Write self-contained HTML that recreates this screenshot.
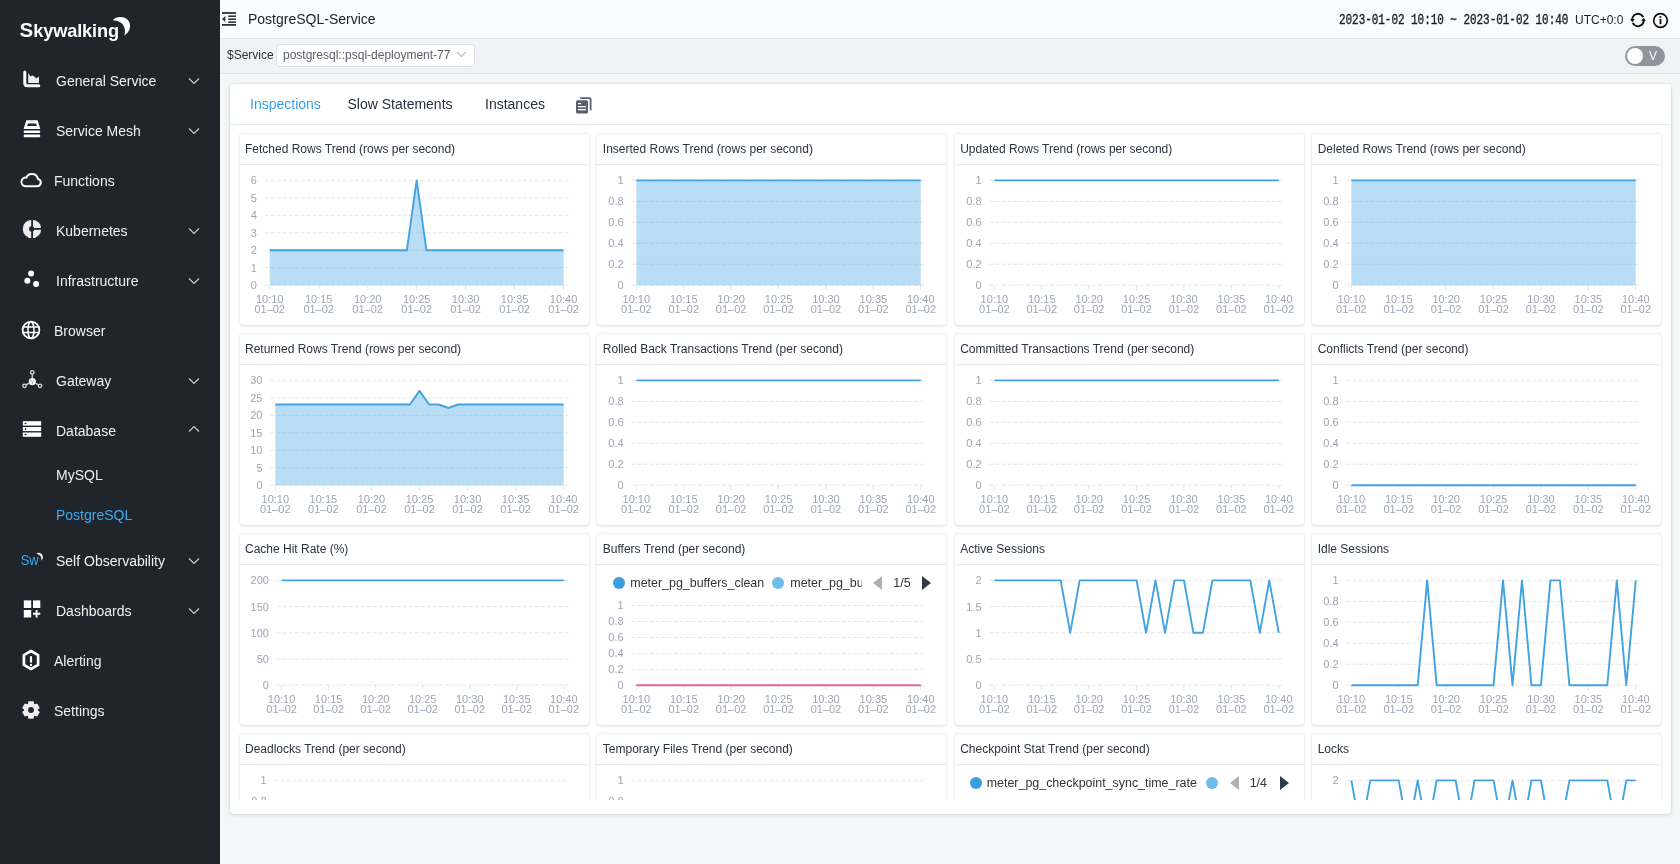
<!DOCTYPE html>
<html><head><meta charset="utf-8"><title>SkyWalking</title>
<style>
*{box-sizing:border-box;margin:0;padding:0}
html,body{width:1680px;height:864px;overflow:hidden;background:#f4f7f8;font-family:"Liberation Sans", sans-serif}
svg text{font-family:"Liberation Sans", sans-serif}
#side{position:absolute;left:0;top:0;width:220px;height:864px;background:#20242b;will-change:transform}
.logo{position:absolute;left:19px;top:13px;color:#fff;font-size:21px;font-weight:bold;letter-spacing:-0.9px}
.mi{position:absolute;color:#f0f0f0;font-size:14px;line-height:18px;white-space:nowrap}
.ic{position:absolute;line-height:0}
.chev{position:absolute}
#nav{position:absolute;left:220px;top:0;width:1460px;height:39px;background:#fafbfc;border-bottom:1px solid #e2e6ea;will-change:transform}
#tool{position:absolute;left:220px;top:39px;width:1460px;height:35px;background:#f0f2f5;border-bottom:1px solid #e2e6ea;will-change:transform}
#tabcard{position:absolute;left:229.5px;top:84px;width:1441px;height:730px;background:#fff;border-radius:4px;box-shadow:0 0 0 1px rgba(0,0,0,0.035),0 1px 4px rgba(0,0,0,0.12)}
#tabhead{position:absolute;left:0;top:0;width:100%;height:40.5px;border-bottom:1px solid #e6e9ed;will-change:transform}
.tab{position:absolute;top:11px;font-size:14px;line-height:18px;color:#28303b;white-space:nowrap}
#grid{position:absolute;left:0;top:0;width:1680px;height:799.5px;overflow:hidden;will-change:transform}
.card{position:absolute;width:349px;height:191px;background:#fff;border-radius:3px;box-shadow:0 0.5px 3px rgba(0,0,0,0.16)}
.ch{position:absolute;left:0;top:0;width:100%;height:30.5px;border-bottom:1px solid #e6e9ed}
.ch span{position:absolute;left:5.5px;top:8px;font-size:12px;line-height:14px;color:#2a3340;white-space:nowrap}
.lg{position:absolute;left:0;width:100%;height:0}
.lg i{position:absolute;top:-6px;width:12px;height:12px;border-radius:50%}
.lg b{position:absolute;top:-7px;font-weight:normal;font-size:12.45px;line-height:14px;color:#333;white-space:nowrap}
.lg s{position:absolute;top:-7px;width:0;height:0;border-top:7px solid transparent;border-bottom:7px solid transparent}
.lg s.al{border-right:9px solid #aab0b8}
.lg s.ar{border-left:9px solid #2f3a48}
</style></head><body>
<div id="side">
<svg style="position:absolute;left:0;top:0" width="220" height="864" viewBox="0 0 220 864"><path d="M24.8 72V83.2Q24.8 85.7 27.3 85.7H38.8" fill="none" stroke="#fff" stroke-width="3" stroke-linecap="round"/><path d="M28.2 73L30.6 76.6 32.2 75.6 34.2 76.2 36.2 78.6 39 76.5V83H28.2Z" fill="#ececec"/><path d="M26.3 120.3H37.6L40.3 129H23.6Z M27.9 123.4L27.1 126.1H36.9L36.1 123.4Z" fill="#fff" fill-rule="evenodd"/><rect x="23.6" y="130.5" width="16.7" height="2.6" rx="1.3" fill="#fff"/><rect x="23.6" y="134.6" width="16.7" height="2.6" rx="1.3" fill="#fff"/><path d="M25.2 186.2H37.2A3.7 3.7 0 0 0 37.9 178.9A6.1 6.1 0 0 0 26.3 177.6A4.3 4.3 0 0 0 25.2 186.2Z" fill="none" stroke="#fff" stroke-width="2"/><circle cx="32" cy="228.9" r="9.25" fill="#ececec"/><rect x="31.2" y="219" width="1.8" height="20" fill="#20242b"/><rect x="32" y="228" width="10" height="1.8" fill="#20242b"/><circle cx="31.7" cy="228.9" r="2.6" fill="#20242b"/><circle cx="31.1" cy="273.5" r="3" fill="#fff"/><circle cx="27.3" cy="280.8" r="3" fill="#fff"/><circle cx="36.1" cy="284.1" r="3" fill="#fff"/><circle cx="31" cy="330" r="8.4" fill="none" stroke="#fff" stroke-width="1.8"/><ellipse cx="30.95" cy="330" rx="3.0" ry="8.3" fill="none" stroke="#fff" stroke-width="1.5"/><path d="M22.5 326.9H39.5M22.5 332.6H39.5" stroke="#fff" stroke-width="1.5"/><circle cx="32.3" cy="381.6" r="3.6" fill="#fff"/><path d="M30.4 380.2L32.3 381.5 34.2 380.2M32.3 381.5V384.5" fill="none" stroke="#888" stroke-width="0.7"/><circle cx="32.3" cy="372.4" r="1.75" fill="none" stroke="#ddd" stroke-width="1.3"/><path d="M32.3 374.2V377.9" stroke="#ccc" stroke-width="1.5"/><circle cx="24.5" cy="385.8" r="1.75" fill="none" stroke="#ddd" stroke-width="1.3"/><circle cx="40" cy="385.8" r="1.75" fill="none" stroke="#ddd" stroke-width="1.3"/><path d="M26.1 384.8L29.2 383.1M38.4 384.8L35.4 383.1" stroke="#ccc" stroke-width="1.5"/><rect x="22.8" y="421.2" width="18.4" height="4.4" fill="#fff"/><rect x="22.8" y="427" width="18.4" height="4.1" fill="#fff"/><rect x="22.8" y="432.5" width="18.4" height="4.3" fill="#fff"/><ellipse cx="25.5" cy="423.4" rx="1.1" ry="0.75" fill="#20242b"/><ellipse cx="25.5" cy="429" rx="0.75" ry="1.05" fill="#20242b"/><ellipse cx="25.5" cy="434.6" rx="1.1" ry="0.75" fill="#20242b"/><text x="20.8" y="565" font-size="15.5" fill="#3aa9ee" letter-spacing="-0.4" textLength="17.5" lengthAdjust="spacingAndGlyphs">Sw</text><path d="M36.6 553.2C38.8 552.3 41.6 553 42.6 555.4 43.4 557.3 42.8 559.6 41.2 560.8 41.8 558.6 41 556.2 39.2 555 38.4 554.4 37.4 554.1 36.6 553.2Z" fill="#eee"/><rect x="23.8" y="600.4" width="7.4" height="7.6" fill="#fff"/><rect x="33" y="600.4" width="7.3" height="7.6" fill="#fff"/><rect x="23.8" y="610" width="7.4" height="7.5" fill="#fff"/><path d="M36.6 610V617.5M33 613.7H40.3" stroke="#fff" stroke-width="1.9"/><path d="M31 651L38.1 655.1V664.9L31 669 23.9 664.9V655.1Z" fill="none" stroke="#fff" stroke-width="2.7" stroke-linejoin="round"/><path d="M31 657V661.8" stroke="#fff" stroke-width="2.2" stroke-linecap="round"/><circle cx="31" cy="665" r="1.15" fill="#fff"/><path d="M27.91 703.83 L28.40 701.28 L33.60 701.28 L34.09 703.83 L34.80 704.24 L37.25 703.39 L39.85 707.89 L37.89 709.59 L37.89 710.41 L39.85 712.11 L37.25 716.61 L34.80 715.76 L34.09 716.17 L33.60 718.72 L28.40 718.72 L27.91 716.17 L27.20 715.76 L24.75 716.61 L22.15 712.11 L24.11 710.41 L24.11 709.59 L22.15 707.89 L24.75 703.39 L27.20 704.24Z M33.90 710.00 A2.9 2.9 0 1 0 28.10 710.00 A2.9 2.9 0 1 0 33.90 710.00Z" fill="#eee" fill-rule="evenodd"/><text x="19.6" y="36.7" font-weight="bold" fill="#fff"><tspan font-size="20.5">S</tspan><tspan font-size="18.2" letter-spacing="-0.15">kywalking</tspan></text><path d="M112.8 20.3C116 16.5 124 15.5 128.3 20.5 131.5 24.5 130.5 32 124.3 35.6 126 30.5 124.5 25 120.5 22.5 118 21 115 20.3 112.8 20.3Z" fill="#fff"/></svg><div class="mi" style="left:56px;top:71.7px">General Service</div><svg class="chev" style="left:188px;top:77px" width="12" height="8" viewBox="0 0 12 8"><path d="M1 1.5l5 5 5-5" fill="none" stroke="#cfd3d8" stroke-width="1.1"/></svg><div class="mi" style="left:56px;top:121.7px">Service Mesh</div><svg class="chev" style="left:188px;top:127px" width="12" height="8" viewBox="0 0 12 8"><path d="M1 1.5l5 5 5-5" fill="none" stroke="#cfd3d8" stroke-width="1.1"/></svg><div class="mi" style="left:54px;top:171.7px">Functions</div><div class="mi" style="left:56px;top:221.7px">Kubernetes</div><svg class="chev" style="left:188px;top:227px" width="12" height="8" viewBox="0 0 12 8"><path d="M1 1.5l5 5 5-5" fill="none" stroke="#cfd3d8" stroke-width="1.1"/></svg><div class="mi" style="left:56px;top:271.7px">Infrastructure</div><svg class="chev" style="left:188px;top:277px" width="12" height="8" viewBox="0 0 12 8"><path d="M1 1.5l5 5 5-5" fill="none" stroke="#cfd3d8" stroke-width="1.1"/></svg><div class="mi" style="left:54px;top:321.7px">Browser</div><div class="mi" style="left:56px;top:371.7px">Gateway</div><svg class="chev" style="left:188px;top:377px" width="12" height="8" viewBox="0 0 12 8"><path d="M1 1.5l5 5 5-5" fill="none" stroke="#cfd3d8" stroke-width="1.1"/></svg><div class="mi" style="left:56px;top:421.7px">Database</div><svg class="chev" style="left:188px;top:425px" width="12" height="8" viewBox="0 0 12 8"><path d="M1 6.5l5-5 5 5" fill="none" stroke="#cfd3d8" stroke-width="1.1"/></svg><div class="mi" style="left:56px;top:551.7px">Self Observability</div><svg class="chev" style="left:188px;top:557px" width="12" height="8" viewBox="0 0 12 8"><path d="M1 1.5l5 5 5-5" fill="none" stroke="#cfd3d8" stroke-width="1.1"/></svg><div class="mi" style="left:56px;top:601.7px">Dashboards</div><svg class="chev" style="left:188px;top:607px" width="12" height="8" viewBox="0 0 12 8"><path d="M1 1.5l5 5 5-5" fill="none" stroke="#cfd3d8" stroke-width="1.1"/></svg><div class="mi" style="left:54px;top:651.7px">Alerting</div><div class="mi" style="left:54px;top:701.7px">Settings</div><div class="mi" style="left:56px;top:466.2px">MySQL</div><div class="mi" style="left:56px;top:506.2px;color:#40a9f0">PostgreSQL</div>
</div>
<div id="nav">
<svg style="position:absolute;left:2px;top:12px" width="15" height="14" viewBox="0 0 15 14"><rect x="0" y="0.1" width="14" height="1.8" fill="#2b333e"/><rect x="6.3" y="3.4" width="7.7" height="1.6" fill="#2b333e"/><rect x="6.3" y="6.4" width="7.7" height="1.6" fill="#2b333e"/><rect x="6.3" y="9.4" width="7.7" height="1.6" fill="#2b333e"/><rect x="0" y="12" width="14" height="1.8" fill="#2b333e"/><path d="M0 7l3.3 -3v6z" fill="#2b333e"/></svg>
<div style="position:absolute;left:28px;top:10px;font-size:14px;line-height:18px;color:#1c1f24">PostgreSQL-Service</div>
<div style="position:absolute;left:1119px;top:11.7px;font-family:'Liberation Mono',monospace;font-size:11px;line-height:16px;color:#1c1f24;transform:scaleY(1.25);transform-origin:0 50%;letter-spacing:-0.05px;-webkit-text-stroke:0.3px #1c1f24">2023-01-02 10:10 ~ 2023-01-02 10:40</div>
<div style="position:absolute;left:1355px;top:12px;font-size:12px;line-height:16px;color:#1c1f24">UTC+0:0</div>
<svg style="position:absolute;left:1410px;top:12.2px" width="16" height="16" viewBox="0 0 16 16"><path d="M2.4 8.6A5.7 5.7 0 0 1 13.2 5.2" fill="none" stroke="#111" stroke-width="2"/><path d="M13.6 7.4A5.7 5.7 0 0 1 2.8 10.8" fill="none" stroke="#111" stroke-width="2"/><path d="M0.2 6.9L4.6 6.9 2.4 10.2Z" fill="#111"/><path d="M15.8 9.1L11.4 9.1 13.6 5.8Z" fill="#111"/></svg>
<svg style="position:absolute;left:1432px;top:12px" width="17" height="17" viewBox="0 0 17 17"><circle cx="8.5" cy="8.5" r="6.8" fill="none" stroke="#111" stroke-width="1.7"/><rect x="7.6" y="7" width="1.8" height="5.3" fill="#111"/><circle cx="8.5" cy="5" r="1.05" fill="#111"/></svg>
</div>
<div id="tool">
<div style="position:absolute;left:7px;top:9px;font-size:12px;line-height:14px;color:#2a3340">$Service</div>
<div style="position:absolute;left:55.5px;top:4.5px;width:199.5px;height:23px;background:#fff;border:1px solid #dcdfe6;border-radius:4px"></div>
<div style="position:absolute;left:63px;top:8.7px;font-size:12px;line-height:14px;color:#5a5e66">postgresql::psql-deployment-77</div>
<svg style="position:absolute;left:236px;top:12px" width="11" height="7" viewBox="0 0 11 7"><path d="M1 1l4.5 4.5L10 1" fill="none" stroke="#b8bcc4" stroke-width="1.1"/></svg>
<div style="position:absolute;left:1405px;top:7px;width:40px;height:20px;border-radius:10px;background:#8f959e"></div>
<div style="position:absolute;left:1407px;top:8.8px;width:16.4px;height:16.4px;border-radius:50%;background:#fff"></div>
<div style="position:absolute;left:1429px;top:9px;font-size:12px;line-height:16px;color:#fff">V</div>
</div>
<div id="tabcard">
<div id="tabhead">
<div class="tab" style="left:20px;color:#3a9ee6">Inspections</div>
<div class="tab" style="left:117.5px">Slow Statements</div>
<div class="tab" style="left:255px">Instances</div>
<svg style="position:absolute;left:346px;top:13.4px" width="16" height="17" viewBox="0 0 16 17"><path d="M4.2 1.2h9.4a1 1 0 0 1 1 1v11" fill="none" stroke="#59606b" stroke-width="1.8"/><rect x="0" y="3.2" width="12" height="13.4" rx="1.5" fill="#59606b"/><rect x="2" y="6" width="3" height="1.2" fill="#fff"/><rect x="2" y="9" width="8" height="1.3" fill="#fff"/><rect x="2" y="12" width="8" height="1.3" fill="#fff"/></svg>
</div>
</div>
<div id="grid">
<div class="card" style="left:239.5px;top:134px"><div class="ch"><span>Fetched Rows Trend (rows per second)</span></div><svg width="349" height="191" viewBox="0 0 349 191" style="position:absolute;left:0;top:0"><line x1="24.8" y1="151.20" x2="328.5" y2="151.20" stroke="rgba(193,197,202,0.45)" stroke-width="1" stroke-dasharray="4 2"/><text x="16.8" y="155.10" text-anchor="end" font-size="11" fill="#9da5b2">0</text><line x1="24.8" y1="133.73" x2="328.5" y2="133.73" stroke="rgba(193,197,202,0.45)" stroke-width="1" stroke-dasharray="4 2"/><text x="16.8" y="137.63" text-anchor="end" font-size="11" fill="#9da5b2">1</text><line x1="24.8" y1="116.27" x2="328.5" y2="116.27" stroke="rgba(193,197,202,0.45)" stroke-width="1" stroke-dasharray="4 2"/><text x="16.8" y="120.17" text-anchor="end" font-size="11" fill="#9da5b2">2</text><line x1="24.8" y1="98.80" x2="328.5" y2="98.80" stroke="rgba(193,197,202,0.45)" stroke-width="1" stroke-dasharray="4 2"/><text x="16.8" y="102.70" text-anchor="end" font-size="11" fill="#9da5b2">3</text><line x1="24.8" y1="81.33" x2="328.5" y2="81.33" stroke="rgba(193,197,202,0.45)" stroke-width="1" stroke-dasharray="4 2"/><text x="16.8" y="85.23" text-anchor="end" font-size="11" fill="#9da5b2">4</text><line x1="24.8" y1="63.87" x2="328.5" y2="63.87" stroke="rgba(193,197,202,0.45)" stroke-width="1" stroke-dasharray="4 2"/><text x="16.8" y="67.77" text-anchor="end" font-size="11" fill="#9da5b2">5</text><line x1="24.8" y1="46.40" x2="328.5" y2="46.40" stroke="rgba(193,197,202,0.45)" stroke-width="1" stroke-dasharray="4 2"/><text x="16.8" y="50.30" text-anchor="end" font-size="11" fill="#9da5b2">6</text><line x1="29.70" y1="151.2" x2="29.70" y2="156.2" stroke="rgba(193,197,202,0.45)" stroke-width="1"/><text x="29.70" y="168.70" text-anchor="middle" font-size="11" fill="#9da5b2">10:10</text><text x="29.70" y="179.40" text-anchor="middle" font-size="11" fill="#9da5b2">01–02</text><line x1="78.68" y1="151.2" x2="78.68" y2="156.2" stroke="rgba(193,197,202,0.45)" stroke-width="1"/><text x="78.68" y="168.70" text-anchor="middle" font-size="11" fill="#9da5b2">10:15</text><text x="78.68" y="179.40" text-anchor="middle" font-size="11" fill="#9da5b2">01–02</text><line x1="127.67" y1="151.2" x2="127.67" y2="156.2" stroke="rgba(193,197,202,0.45)" stroke-width="1"/><text x="127.67" y="168.70" text-anchor="middle" font-size="11" fill="#9da5b2">10:20</text><text x="127.67" y="179.40" text-anchor="middle" font-size="11" fill="#9da5b2">01–02</text><line x1="176.65" y1="151.2" x2="176.65" y2="156.2" stroke="rgba(193,197,202,0.45)" stroke-width="1"/><text x="176.65" y="168.70" text-anchor="middle" font-size="11" fill="#9da5b2">10:25</text><text x="176.65" y="179.40" text-anchor="middle" font-size="11" fill="#9da5b2">01–02</text><line x1="225.63" y1="151.2" x2="225.63" y2="156.2" stroke="rgba(193,197,202,0.45)" stroke-width="1"/><text x="225.63" y="168.70" text-anchor="middle" font-size="11" fill="#9da5b2">10:30</text><text x="225.63" y="179.40" text-anchor="middle" font-size="11" fill="#9da5b2">01–02</text><line x1="274.62" y1="151.2" x2="274.62" y2="156.2" stroke="rgba(193,197,202,0.45)" stroke-width="1"/><text x="274.62" y="168.70" text-anchor="middle" font-size="11" fill="#9da5b2">10:35</text><text x="274.62" y="179.40" text-anchor="middle" font-size="11" fill="#9da5b2">01–02</text><line x1="323.60" y1="151.2" x2="323.60" y2="156.2" stroke="rgba(193,197,202,0.45)" stroke-width="1"/><text x="323.60" y="168.70" text-anchor="middle" font-size="11" fill="#9da5b2">10:40</text><text x="323.60" y="179.40" text-anchor="middle" font-size="11" fill="#9da5b2">01–02</text><polygon points="29.70,151.2 29.70,116.27 39.50,116.27 49.29,116.27 59.09,116.27 68.89,116.27 78.68,116.27 88.48,116.27 98.28,116.27 108.07,116.27 117.87,116.27 127.67,116.27 137.46,116.27 147.26,116.27 157.06,116.27 166.85,116.27 176.65,46.40 186.45,116.27 196.24,116.27 206.04,116.27 215.84,116.27 225.63,116.27 235.43,116.27 245.23,116.27 255.02,116.27 264.82,116.27 274.62,116.27 284.41,116.27 294.21,116.27 304.01,116.27 313.80,116.27 323.60,116.27 323.60,151.2" fill="rgba(80,170,230,0.4)"/><polyline points="29.70,116.27 39.50,116.27 49.29,116.27 59.09,116.27 68.89,116.27 78.68,116.27 88.48,116.27 98.28,116.27 108.07,116.27 117.87,116.27 127.67,116.27 137.46,116.27 147.26,116.27 157.06,116.27 166.85,116.27 176.65,46.40 186.45,116.27 196.24,116.27 206.04,116.27 215.84,116.27 225.63,116.27 235.43,116.27 245.23,116.27 255.02,116.27 264.82,116.27 274.62,116.27 284.41,116.27 294.21,116.27 304.01,116.27 313.80,116.27 323.60,116.27" fill="none" stroke="#42a3e3" stroke-width="1.9" stroke-linejoin="round"/></svg></div><div class="card" style="left:597.3px;top:134px"><div class="ch"><span>Inserted Rows Trend (rows per second)</span></div><svg width="349" height="191" viewBox="0 0 349 191" style="position:absolute;left:0;top:0"><line x1="34.6" y1="151.20" x2="328.5" y2="151.20" stroke="rgba(193,197,202,0.45)" stroke-width="1" stroke-dasharray="4 2"/><text x="26.6" y="155.10" text-anchor="end" font-size="11" fill="#9da5b2">0</text><line x1="34.6" y1="130.24" x2="328.5" y2="130.24" stroke="rgba(193,197,202,0.45)" stroke-width="1" stroke-dasharray="4 2"/><text x="26.6" y="134.14" text-anchor="end" font-size="11" fill="#9da5b2">0.2</text><line x1="34.6" y1="109.28" x2="328.5" y2="109.28" stroke="rgba(193,197,202,0.45)" stroke-width="1" stroke-dasharray="4 2"/><text x="26.6" y="113.18" text-anchor="end" font-size="11" fill="#9da5b2">0.4</text><line x1="34.6" y1="88.32" x2="328.5" y2="88.32" stroke="rgba(193,197,202,0.45)" stroke-width="1" stroke-dasharray="4 2"/><text x="26.6" y="92.22" text-anchor="end" font-size="11" fill="#9da5b2">0.6</text><line x1="34.6" y1="67.36" x2="328.5" y2="67.36" stroke="rgba(193,197,202,0.45)" stroke-width="1" stroke-dasharray="4 2"/><text x="26.6" y="71.26" text-anchor="end" font-size="11" fill="#9da5b2">0.8</text><line x1="34.6" y1="46.40" x2="328.5" y2="46.40" stroke="rgba(193,197,202,0.45)" stroke-width="1" stroke-dasharray="4 2"/><text x="26.6" y="50.30" text-anchor="end" font-size="11" fill="#9da5b2">1</text><line x1="39.34" y1="151.2" x2="39.34" y2="156.2" stroke="rgba(193,197,202,0.45)" stroke-width="1"/><text x="39.34" y="168.70" text-anchor="middle" font-size="11" fill="#9da5b2">10:10</text><text x="39.34" y="179.40" text-anchor="middle" font-size="11" fill="#9da5b2">01–02</text><line x1="86.74" y1="151.2" x2="86.74" y2="156.2" stroke="rgba(193,197,202,0.45)" stroke-width="1"/><text x="86.74" y="168.70" text-anchor="middle" font-size="11" fill="#9da5b2">10:15</text><text x="86.74" y="179.40" text-anchor="middle" font-size="11" fill="#9da5b2">01–02</text><line x1="134.15" y1="151.2" x2="134.15" y2="156.2" stroke="rgba(193,197,202,0.45)" stroke-width="1"/><text x="134.15" y="168.70" text-anchor="middle" font-size="11" fill="#9da5b2">10:20</text><text x="134.15" y="179.40" text-anchor="middle" font-size="11" fill="#9da5b2">01–02</text><line x1="181.55" y1="151.2" x2="181.55" y2="156.2" stroke="rgba(193,197,202,0.45)" stroke-width="1"/><text x="181.55" y="168.70" text-anchor="middle" font-size="11" fill="#9da5b2">10:25</text><text x="181.55" y="179.40" text-anchor="middle" font-size="11" fill="#9da5b2">01–02</text><line x1="228.95" y1="151.2" x2="228.95" y2="156.2" stroke="rgba(193,197,202,0.45)" stroke-width="1"/><text x="228.95" y="168.70" text-anchor="middle" font-size="11" fill="#9da5b2">10:30</text><text x="228.95" y="179.40" text-anchor="middle" font-size="11" fill="#9da5b2">01–02</text><line x1="276.36" y1="151.2" x2="276.36" y2="156.2" stroke="rgba(193,197,202,0.45)" stroke-width="1"/><text x="276.36" y="168.70" text-anchor="middle" font-size="11" fill="#9da5b2">10:35</text><text x="276.36" y="179.40" text-anchor="middle" font-size="11" fill="#9da5b2">01–02</text><line x1="323.76" y1="151.2" x2="323.76" y2="156.2" stroke="rgba(193,197,202,0.45)" stroke-width="1"/><text x="323.76" y="168.70" text-anchor="middle" font-size="11" fill="#9da5b2">10:40</text><text x="323.76" y="179.40" text-anchor="middle" font-size="11" fill="#9da5b2">01–02</text><polygon points="39.34,151.2 39.34,46.40 48.82,46.40 58.30,46.40 67.78,46.40 77.26,46.40 86.74,46.40 96.22,46.40 105.70,46.40 115.19,46.40 124.67,46.40 134.15,46.40 143.63,46.40 153.11,46.40 162.59,46.40 172.07,46.40 181.55,46.40 191.03,46.40 200.51,46.40 209.99,46.40 219.47,46.40 228.95,46.40 238.43,46.40 247.91,46.40 257.40,46.40 266.88,46.40 276.36,46.40 285.84,46.40 295.32,46.40 304.80,46.40 314.28,46.40 323.76,46.40 323.76,151.2" fill="rgba(80,170,230,0.4)"/><polyline points="39.34,46.40 48.82,46.40 58.30,46.40 67.78,46.40 77.26,46.40 86.74,46.40 96.22,46.40 105.70,46.40 115.19,46.40 124.67,46.40 134.15,46.40 143.63,46.40 153.11,46.40 162.59,46.40 172.07,46.40 181.55,46.40 191.03,46.40 200.51,46.40 209.99,46.40 219.47,46.40 228.95,46.40 238.43,46.40 247.91,46.40 257.40,46.40 266.88,46.40 276.36,46.40 285.84,46.40 295.32,46.40 304.80,46.40 314.28,46.40 323.76,46.40" fill="none" stroke="#42a3e3" stroke-width="1.9" stroke-linejoin="round"/></svg></div><div class="card" style="left:954.7px;top:134px"><div class="ch"><span>Updated Rows Trend (rows per second)</span></div><svg width="349" height="191" viewBox="0 0 349 191" style="position:absolute;left:0;top:0"><line x1="34.6" y1="151.20" x2="328.5" y2="151.20" stroke="rgba(193,197,202,0.45)" stroke-width="1" stroke-dasharray="4 2"/><text x="26.6" y="155.10" text-anchor="end" font-size="11" fill="#9da5b2">0</text><line x1="34.6" y1="130.24" x2="328.5" y2="130.24" stroke="rgba(193,197,202,0.45)" stroke-width="1" stroke-dasharray="4 2"/><text x="26.6" y="134.14" text-anchor="end" font-size="11" fill="#9da5b2">0.2</text><line x1="34.6" y1="109.28" x2="328.5" y2="109.28" stroke="rgba(193,197,202,0.45)" stroke-width="1" stroke-dasharray="4 2"/><text x="26.6" y="113.18" text-anchor="end" font-size="11" fill="#9da5b2">0.4</text><line x1="34.6" y1="88.32" x2="328.5" y2="88.32" stroke="rgba(193,197,202,0.45)" stroke-width="1" stroke-dasharray="4 2"/><text x="26.6" y="92.22" text-anchor="end" font-size="11" fill="#9da5b2">0.6</text><line x1="34.6" y1="67.36" x2="328.5" y2="67.36" stroke="rgba(193,197,202,0.45)" stroke-width="1" stroke-dasharray="4 2"/><text x="26.6" y="71.26" text-anchor="end" font-size="11" fill="#9da5b2">0.8</text><line x1="34.6" y1="46.40" x2="328.5" y2="46.40" stroke="rgba(193,197,202,0.45)" stroke-width="1" stroke-dasharray="4 2"/><text x="26.6" y="50.30" text-anchor="end" font-size="11" fill="#9da5b2">1</text><line x1="39.34" y1="151.2" x2="39.34" y2="156.2" stroke="rgba(193,197,202,0.45)" stroke-width="1"/><text x="39.34" y="168.70" text-anchor="middle" font-size="11" fill="#9da5b2">10:10</text><text x="39.34" y="179.40" text-anchor="middle" font-size="11" fill="#9da5b2">01–02</text><line x1="86.74" y1="151.2" x2="86.74" y2="156.2" stroke="rgba(193,197,202,0.45)" stroke-width="1"/><text x="86.74" y="168.70" text-anchor="middle" font-size="11" fill="#9da5b2">10:15</text><text x="86.74" y="179.40" text-anchor="middle" font-size="11" fill="#9da5b2">01–02</text><line x1="134.15" y1="151.2" x2="134.15" y2="156.2" stroke="rgba(193,197,202,0.45)" stroke-width="1"/><text x="134.15" y="168.70" text-anchor="middle" font-size="11" fill="#9da5b2">10:20</text><text x="134.15" y="179.40" text-anchor="middle" font-size="11" fill="#9da5b2">01–02</text><line x1="181.55" y1="151.2" x2="181.55" y2="156.2" stroke="rgba(193,197,202,0.45)" stroke-width="1"/><text x="181.55" y="168.70" text-anchor="middle" font-size="11" fill="#9da5b2">10:25</text><text x="181.55" y="179.40" text-anchor="middle" font-size="11" fill="#9da5b2">01–02</text><line x1="228.95" y1="151.2" x2="228.95" y2="156.2" stroke="rgba(193,197,202,0.45)" stroke-width="1"/><text x="228.95" y="168.70" text-anchor="middle" font-size="11" fill="#9da5b2">10:30</text><text x="228.95" y="179.40" text-anchor="middle" font-size="11" fill="#9da5b2">01–02</text><line x1="276.36" y1="151.2" x2="276.36" y2="156.2" stroke="rgba(193,197,202,0.45)" stroke-width="1"/><text x="276.36" y="168.70" text-anchor="middle" font-size="11" fill="#9da5b2">10:35</text><text x="276.36" y="179.40" text-anchor="middle" font-size="11" fill="#9da5b2">01–02</text><line x1="323.76" y1="151.2" x2="323.76" y2="156.2" stroke="rgba(193,197,202,0.45)" stroke-width="1"/><text x="323.76" y="168.70" text-anchor="middle" font-size="11" fill="#9da5b2">10:40</text><text x="323.76" y="179.40" text-anchor="middle" font-size="11" fill="#9da5b2">01–02</text><polyline points="39.34,46.40 48.82,46.40 58.30,46.40 67.78,46.40 77.26,46.40 86.74,46.40 96.22,46.40 105.70,46.40 115.19,46.40 124.67,46.40 134.15,46.40 143.63,46.40 153.11,46.40 162.59,46.40 172.07,46.40 181.55,46.40 191.03,46.40 200.51,46.40 209.99,46.40 219.47,46.40 228.95,46.40 238.43,46.40 247.91,46.40 257.40,46.40 266.88,46.40 276.36,46.40 285.84,46.40 295.32,46.40 304.80,46.40 314.28,46.40 323.76,46.40" fill="none" stroke="#42a3e3" stroke-width="1.9" stroke-linejoin="round"/></svg></div><div class="card" style="left:1312.2px;top:134px"><div class="ch"><span>Deleted Rows Trend (rows per second)</span></div><svg width="349" height="191" viewBox="0 0 349 191" style="position:absolute;left:0;top:0"><line x1="34.6" y1="151.20" x2="328.5" y2="151.20" stroke="rgba(193,197,202,0.45)" stroke-width="1" stroke-dasharray="4 2"/><text x="26.6" y="155.10" text-anchor="end" font-size="11" fill="#9da5b2">0</text><line x1="34.6" y1="130.24" x2="328.5" y2="130.24" stroke="rgba(193,197,202,0.45)" stroke-width="1" stroke-dasharray="4 2"/><text x="26.6" y="134.14" text-anchor="end" font-size="11" fill="#9da5b2">0.2</text><line x1="34.6" y1="109.28" x2="328.5" y2="109.28" stroke="rgba(193,197,202,0.45)" stroke-width="1" stroke-dasharray="4 2"/><text x="26.6" y="113.18" text-anchor="end" font-size="11" fill="#9da5b2">0.4</text><line x1="34.6" y1="88.32" x2="328.5" y2="88.32" stroke="rgba(193,197,202,0.45)" stroke-width="1" stroke-dasharray="4 2"/><text x="26.6" y="92.22" text-anchor="end" font-size="11" fill="#9da5b2">0.6</text><line x1="34.6" y1="67.36" x2="328.5" y2="67.36" stroke="rgba(193,197,202,0.45)" stroke-width="1" stroke-dasharray="4 2"/><text x="26.6" y="71.26" text-anchor="end" font-size="11" fill="#9da5b2">0.8</text><line x1="34.6" y1="46.40" x2="328.5" y2="46.40" stroke="rgba(193,197,202,0.45)" stroke-width="1" stroke-dasharray="4 2"/><text x="26.6" y="50.30" text-anchor="end" font-size="11" fill="#9da5b2">1</text><line x1="39.34" y1="151.2" x2="39.34" y2="156.2" stroke="rgba(193,197,202,0.45)" stroke-width="1"/><text x="39.34" y="168.70" text-anchor="middle" font-size="11" fill="#9da5b2">10:10</text><text x="39.34" y="179.40" text-anchor="middle" font-size="11" fill="#9da5b2">01–02</text><line x1="86.74" y1="151.2" x2="86.74" y2="156.2" stroke="rgba(193,197,202,0.45)" stroke-width="1"/><text x="86.74" y="168.70" text-anchor="middle" font-size="11" fill="#9da5b2">10:15</text><text x="86.74" y="179.40" text-anchor="middle" font-size="11" fill="#9da5b2">01–02</text><line x1="134.15" y1="151.2" x2="134.15" y2="156.2" stroke="rgba(193,197,202,0.45)" stroke-width="1"/><text x="134.15" y="168.70" text-anchor="middle" font-size="11" fill="#9da5b2">10:20</text><text x="134.15" y="179.40" text-anchor="middle" font-size="11" fill="#9da5b2">01–02</text><line x1="181.55" y1="151.2" x2="181.55" y2="156.2" stroke="rgba(193,197,202,0.45)" stroke-width="1"/><text x="181.55" y="168.70" text-anchor="middle" font-size="11" fill="#9da5b2">10:25</text><text x="181.55" y="179.40" text-anchor="middle" font-size="11" fill="#9da5b2">01–02</text><line x1="228.95" y1="151.2" x2="228.95" y2="156.2" stroke="rgba(193,197,202,0.45)" stroke-width="1"/><text x="228.95" y="168.70" text-anchor="middle" font-size="11" fill="#9da5b2">10:30</text><text x="228.95" y="179.40" text-anchor="middle" font-size="11" fill="#9da5b2">01–02</text><line x1="276.36" y1="151.2" x2="276.36" y2="156.2" stroke="rgba(193,197,202,0.45)" stroke-width="1"/><text x="276.36" y="168.70" text-anchor="middle" font-size="11" fill="#9da5b2">10:35</text><text x="276.36" y="179.40" text-anchor="middle" font-size="11" fill="#9da5b2">01–02</text><line x1="323.76" y1="151.2" x2="323.76" y2="156.2" stroke="rgba(193,197,202,0.45)" stroke-width="1"/><text x="323.76" y="168.70" text-anchor="middle" font-size="11" fill="#9da5b2">10:40</text><text x="323.76" y="179.40" text-anchor="middle" font-size="11" fill="#9da5b2">01–02</text><polygon points="39.34,151.2 39.34,46.40 48.82,46.40 58.30,46.40 67.78,46.40 77.26,46.40 86.74,46.40 96.22,46.40 105.70,46.40 115.19,46.40 124.67,46.40 134.15,46.40 143.63,46.40 153.11,46.40 162.59,46.40 172.07,46.40 181.55,46.40 191.03,46.40 200.51,46.40 209.99,46.40 219.47,46.40 228.95,46.40 238.43,46.40 247.91,46.40 257.40,46.40 266.88,46.40 276.36,46.40 285.84,46.40 295.32,46.40 304.80,46.40 314.28,46.40 323.76,46.40 323.76,151.2" fill="rgba(80,170,230,0.4)"/><polyline points="39.34,46.40 48.82,46.40 58.30,46.40 67.78,46.40 77.26,46.40 86.74,46.40 96.22,46.40 105.70,46.40 115.19,46.40 124.67,46.40 134.15,46.40 143.63,46.40 153.11,46.40 162.59,46.40 172.07,46.40 181.55,46.40 191.03,46.40 200.51,46.40 209.99,46.40 219.47,46.40 228.95,46.40 238.43,46.40 247.91,46.40 257.40,46.40 266.88,46.40 276.36,46.40 285.84,46.40 295.32,46.40 304.80,46.40 314.28,46.40 323.76,46.40" fill="none" stroke="#42a3e3" stroke-width="1.9" stroke-linejoin="round"/></svg></div><div class="card" style="left:239.5px;top:334px"><div class="ch"><span>Returned Rows Trend (rows per second)</span></div><svg width="349" height="191" viewBox="0 0 349 191" style="position:absolute;left:0;top:0"><line x1="30.5" y1="151.20" x2="328.5" y2="151.20" stroke="rgba(193,197,202,0.45)" stroke-width="1" stroke-dasharray="4 2"/><text x="22.5" y="155.10" text-anchor="end" font-size="11" fill="#9da5b2">0</text><line x1="30.5" y1="133.73" x2="328.5" y2="133.73" stroke="rgba(193,197,202,0.45)" stroke-width="1" stroke-dasharray="4 2"/><text x="22.5" y="137.63" text-anchor="end" font-size="11" fill="#9da5b2">5</text><line x1="30.5" y1="116.27" x2="328.5" y2="116.27" stroke="rgba(193,197,202,0.45)" stroke-width="1" stroke-dasharray="4 2"/><text x="22.5" y="120.17" text-anchor="end" font-size="11" fill="#9da5b2">10</text><line x1="30.5" y1="98.80" x2="328.5" y2="98.80" stroke="rgba(193,197,202,0.45)" stroke-width="1" stroke-dasharray="4 2"/><text x="22.5" y="102.70" text-anchor="end" font-size="11" fill="#9da5b2">15</text><line x1="30.5" y1="81.33" x2="328.5" y2="81.33" stroke="rgba(193,197,202,0.45)" stroke-width="1" stroke-dasharray="4 2"/><text x="22.5" y="85.23" text-anchor="end" font-size="11" fill="#9da5b2">20</text><line x1="30.5" y1="63.87" x2="328.5" y2="63.87" stroke="rgba(193,197,202,0.45)" stroke-width="1" stroke-dasharray="4 2"/><text x="22.5" y="67.77" text-anchor="end" font-size="11" fill="#9da5b2">25</text><line x1="30.5" y1="46.40" x2="328.5" y2="46.40" stroke="rgba(193,197,202,0.45)" stroke-width="1" stroke-dasharray="4 2"/><text x="22.5" y="50.30" text-anchor="end" font-size="11" fill="#9da5b2">30</text><line x1="35.31" y1="151.2" x2="35.31" y2="156.2" stroke="rgba(193,197,202,0.45)" stroke-width="1"/><text x="35.31" y="168.70" text-anchor="middle" font-size="11" fill="#9da5b2">10:10</text><text x="35.31" y="179.40" text-anchor="middle" font-size="11" fill="#9da5b2">01–02</text><line x1="83.37" y1="151.2" x2="83.37" y2="156.2" stroke="rgba(193,197,202,0.45)" stroke-width="1"/><text x="83.37" y="168.70" text-anchor="middle" font-size="11" fill="#9da5b2">10:15</text><text x="83.37" y="179.40" text-anchor="middle" font-size="11" fill="#9da5b2">01–02</text><line x1="131.44" y1="151.2" x2="131.44" y2="156.2" stroke="rgba(193,197,202,0.45)" stroke-width="1"/><text x="131.44" y="168.70" text-anchor="middle" font-size="11" fill="#9da5b2">10:20</text><text x="131.44" y="179.40" text-anchor="middle" font-size="11" fill="#9da5b2">01–02</text><line x1="179.50" y1="151.2" x2="179.50" y2="156.2" stroke="rgba(193,197,202,0.45)" stroke-width="1"/><text x="179.50" y="168.70" text-anchor="middle" font-size="11" fill="#9da5b2">10:25</text><text x="179.50" y="179.40" text-anchor="middle" font-size="11" fill="#9da5b2">01–02</text><line x1="227.56" y1="151.2" x2="227.56" y2="156.2" stroke="rgba(193,197,202,0.45)" stroke-width="1"/><text x="227.56" y="168.70" text-anchor="middle" font-size="11" fill="#9da5b2">10:30</text><text x="227.56" y="179.40" text-anchor="middle" font-size="11" fill="#9da5b2">01–02</text><line x1="275.63" y1="151.2" x2="275.63" y2="156.2" stroke="rgba(193,197,202,0.45)" stroke-width="1"/><text x="275.63" y="168.70" text-anchor="middle" font-size="11" fill="#9da5b2">10:35</text><text x="275.63" y="179.40" text-anchor="middle" font-size="11" fill="#9da5b2">01–02</text><line x1="323.69" y1="151.2" x2="323.69" y2="156.2" stroke="rgba(193,197,202,0.45)" stroke-width="1"/><text x="323.69" y="168.70" text-anchor="middle" font-size="11" fill="#9da5b2">10:40</text><text x="323.69" y="179.40" text-anchor="middle" font-size="11" fill="#9da5b2">01–02</text><polygon points="35.31,151.2 35.31,70.50 44.92,70.50 54.53,70.50 64.15,70.50 73.76,70.50 83.37,70.50 92.98,70.50 102.60,70.50 112.21,70.50 121.82,70.50 131.44,70.50 141.05,70.50 150.66,70.50 160.27,70.50 169.89,70.50 179.50,56.88 189.11,70.50 198.73,70.50 208.34,74.00 217.95,70.50 227.56,70.50 237.18,70.50 246.79,70.50 256.40,70.50 266.02,70.50 275.63,70.50 285.24,70.50 294.85,70.50 304.47,70.50 314.08,70.50 323.69,70.50 323.69,151.2" fill="rgba(80,170,230,0.4)"/><polyline points="35.31,70.50 44.92,70.50 54.53,70.50 64.15,70.50 73.76,70.50 83.37,70.50 92.98,70.50 102.60,70.50 112.21,70.50 121.82,70.50 131.44,70.50 141.05,70.50 150.66,70.50 160.27,70.50 169.89,70.50 179.50,56.88 189.11,70.50 198.73,70.50 208.34,74.00 217.95,70.50 227.56,70.50 237.18,70.50 246.79,70.50 256.40,70.50 266.02,70.50 275.63,70.50 285.24,70.50 294.85,70.50 304.47,70.50 314.08,70.50 323.69,70.50" fill="none" stroke="#42a3e3" stroke-width="1.9" stroke-linejoin="round"/></svg></div><div class="card" style="left:597.3px;top:334px"><div class="ch"><span>Rolled Back Transactions Trend (per second)</span></div><svg width="349" height="191" viewBox="0 0 349 191" style="position:absolute;left:0;top:0"><line x1="34.6" y1="151.20" x2="328.5" y2="151.20" stroke="rgba(193,197,202,0.45)" stroke-width="1" stroke-dasharray="4 2"/><text x="26.6" y="155.10" text-anchor="end" font-size="11" fill="#9da5b2">0</text><line x1="34.6" y1="130.24" x2="328.5" y2="130.24" stroke="rgba(193,197,202,0.45)" stroke-width="1" stroke-dasharray="4 2"/><text x="26.6" y="134.14" text-anchor="end" font-size="11" fill="#9da5b2">0.2</text><line x1="34.6" y1="109.28" x2="328.5" y2="109.28" stroke="rgba(193,197,202,0.45)" stroke-width="1" stroke-dasharray="4 2"/><text x="26.6" y="113.18" text-anchor="end" font-size="11" fill="#9da5b2">0.4</text><line x1="34.6" y1="88.32" x2="328.5" y2="88.32" stroke="rgba(193,197,202,0.45)" stroke-width="1" stroke-dasharray="4 2"/><text x="26.6" y="92.22" text-anchor="end" font-size="11" fill="#9da5b2">0.6</text><line x1="34.6" y1="67.36" x2="328.5" y2="67.36" stroke="rgba(193,197,202,0.45)" stroke-width="1" stroke-dasharray="4 2"/><text x="26.6" y="71.26" text-anchor="end" font-size="11" fill="#9da5b2">0.8</text><line x1="34.6" y1="46.40" x2="328.5" y2="46.40" stroke="rgba(193,197,202,0.45)" stroke-width="1" stroke-dasharray="4 2"/><text x="26.6" y="50.30" text-anchor="end" font-size="11" fill="#9da5b2">1</text><line x1="39.34" y1="151.2" x2="39.34" y2="156.2" stroke="rgba(193,197,202,0.45)" stroke-width="1"/><text x="39.34" y="168.70" text-anchor="middle" font-size="11" fill="#9da5b2">10:10</text><text x="39.34" y="179.40" text-anchor="middle" font-size="11" fill="#9da5b2">01–02</text><line x1="86.74" y1="151.2" x2="86.74" y2="156.2" stroke="rgba(193,197,202,0.45)" stroke-width="1"/><text x="86.74" y="168.70" text-anchor="middle" font-size="11" fill="#9da5b2">10:15</text><text x="86.74" y="179.40" text-anchor="middle" font-size="11" fill="#9da5b2">01–02</text><line x1="134.15" y1="151.2" x2="134.15" y2="156.2" stroke="rgba(193,197,202,0.45)" stroke-width="1"/><text x="134.15" y="168.70" text-anchor="middle" font-size="11" fill="#9da5b2">10:20</text><text x="134.15" y="179.40" text-anchor="middle" font-size="11" fill="#9da5b2">01–02</text><line x1="181.55" y1="151.2" x2="181.55" y2="156.2" stroke="rgba(193,197,202,0.45)" stroke-width="1"/><text x="181.55" y="168.70" text-anchor="middle" font-size="11" fill="#9da5b2">10:25</text><text x="181.55" y="179.40" text-anchor="middle" font-size="11" fill="#9da5b2">01–02</text><line x1="228.95" y1="151.2" x2="228.95" y2="156.2" stroke="rgba(193,197,202,0.45)" stroke-width="1"/><text x="228.95" y="168.70" text-anchor="middle" font-size="11" fill="#9da5b2">10:30</text><text x="228.95" y="179.40" text-anchor="middle" font-size="11" fill="#9da5b2">01–02</text><line x1="276.36" y1="151.2" x2="276.36" y2="156.2" stroke="rgba(193,197,202,0.45)" stroke-width="1"/><text x="276.36" y="168.70" text-anchor="middle" font-size="11" fill="#9da5b2">10:35</text><text x="276.36" y="179.40" text-anchor="middle" font-size="11" fill="#9da5b2">01–02</text><line x1="323.76" y1="151.2" x2="323.76" y2="156.2" stroke="rgba(193,197,202,0.45)" stroke-width="1"/><text x="323.76" y="168.70" text-anchor="middle" font-size="11" fill="#9da5b2">10:40</text><text x="323.76" y="179.40" text-anchor="middle" font-size="11" fill="#9da5b2">01–02</text><polyline points="39.34,46.40 48.82,46.40 58.30,46.40 67.78,46.40 77.26,46.40 86.74,46.40 96.22,46.40 105.70,46.40 115.19,46.40 124.67,46.40 134.15,46.40 143.63,46.40 153.11,46.40 162.59,46.40 172.07,46.40 181.55,46.40 191.03,46.40 200.51,46.40 209.99,46.40 219.47,46.40 228.95,46.40 238.43,46.40 247.91,46.40 257.40,46.40 266.88,46.40 276.36,46.40 285.84,46.40 295.32,46.40 304.80,46.40 314.28,46.40 323.76,46.40" fill="none" stroke="#42a3e3" stroke-width="1.9" stroke-linejoin="round"/></svg></div><div class="card" style="left:954.7px;top:334px"><div class="ch"><span>Committed Transactions Trend (per second)</span></div><svg width="349" height="191" viewBox="0 0 349 191" style="position:absolute;left:0;top:0"><line x1="34.6" y1="151.20" x2="328.5" y2="151.20" stroke="rgba(193,197,202,0.45)" stroke-width="1" stroke-dasharray="4 2"/><text x="26.6" y="155.10" text-anchor="end" font-size="11" fill="#9da5b2">0</text><line x1="34.6" y1="130.24" x2="328.5" y2="130.24" stroke="rgba(193,197,202,0.45)" stroke-width="1" stroke-dasharray="4 2"/><text x="26.6" y="134.14" text-anchor="end" font-size="11" fill="#9da5b2">0.2</text><line x1="34.6" y1="109.28" x2="328.5" y2="109.28" stroke="rgba(193,197,202,0.45)" stroke-width="1" stroke-dasharray="4 2"/><text x="26.6" y="113.18" text-anchor="end" font-size="11" fill="#9da5b2">0.4</text><line x1="34.6" y1="88.32" x2="328.5" y2="88.32" stroke="rgba(193,197,202,0.45)" stroke-width="1" stroke-dasharray="4 2"/><text x="26.6" y="92.22" text-anchor="end" font-size="11" fill="#9da5b2">0.6</text><line x1="34.6" y1="67.36" x2="328.5" y2="67.36" stroke="rgba(193,197,202,0.45)" stroke-width="1" stroke-dasharray="4 2"/><text x="26.6" y="71.26" text-anchor="end" font-size="11" fill="#9da5b2">0.8</text><line x1="34.6" y1="46.40" x2="328.5" y2="46.40" stroke="rgba(193,197,202,0.45)" stroke-width="1" stroke-dasharray="4 2"/><text x="26.6" y="50.30" text-anchor="end" font-size="11" fill="#9da5b2">1</text><line x1="39.34" y1="151.2" x2="39.34" y2="156.2" stroke="rgba(193,197,202,0.45)" stroke-width="1"/><text x="39.34" y="168.70" text-anchor="middle" font-size="11" fill="#9da5b2">10:10</text><text x="39.34" y="179.40" text-anchor="middle" font-size="11" fill="#9da5b2">01–02</text><line x1="86.74" y1="151.2" x2="86.74" y2="156.2" stroke="rgba(193,197,202,0.45)" stroke-width="1"/><text x="86.74" y="168.70" text-anchor="middle" font-size="11" fill="#9da5b2">10:15</text><text x="86.74" y="179.40" text-anchor="middle" font-size="11" fill="#9da5b2">01–02</text><line x1="134.15" y1="151.2" x2="134.15" y2="156.2" stroke="rgba(193,197,202,0.45)" stroke-width="1"/><text x="134.15" y="168.70" text-anchor="middle" font-size="11" fill="#9da5b2">10:20</text><text x="134.15" y="179.40" text-anchor="middle" font-size="11" fill="#9da5b2">01–02</text><line x1="181.55" y1="151.2" x2="181.55" y2="156.2" stroke="rgba(193,197,202,0.45)" stroke-width="1"/><text x="181.55" y="168.70" text-anchor="middle" font-size="11" fill="#9da5b2">10:25</text><text x="181.55" y="179.40" text-anchor="middle" font-size="11" fill="#9da5b2">01–02</text><line x1="228.95" y1="151.2" x2="228.95" y2="156.2" stroke="rgba(193,197,202,0.45)" stroke-width="1"/><text x="228.95" y="168.70" text-anchor="middle" font-size="11" fill="#9da5b2">10:30</text><text x="228.95" y="179.40" text-anchor="middle" font-size="11" fill="#9da5b2">01–02</text><line x1="276.36" y1="151.2" x2="276.36" y2="156.2" stroke="rgba(193,197,202,0.45)" stroke-width="1"/><text x="276.36" y="168.70" text-anchor="middle" font-size="11" fill="#9da5b2">10:35</text><text x="276.36" y="179.40" text-anchor="middle" font-size="11" fill="#9da5b2">01–02</text><line x1="323.76" y1="151.2" x2="323.76" y2="156.2" stroke="rgba(193,197,202,0.45)" stroke-width="1"/><text x="323.76" y="168.70" text-anchor="middle" font-size="11" fill="#9da5b2">10:40</text><text x="323.76" y="179.40" text-anchor="middle" font-size="11" fill="#9da5b2">01–02</text><polyline points="39.34,46.40 48.82,46.40 58.30,46.40 67.78,46.40 77.26,46.40 86.74,46.40 96.22,46.40 105.70,46.40 115.19,46.40 124.67,46.40 134.15,46.40 143.63,46.40 153.11,46.40 162.59,46.40 172.07,46.40 181.55,46.40 191.03,46.40 200.51,46.40 209.99,46.40 219.47,46.40 228.95,46.40 238.43,46.40 247.91,46.40 257.40,46.40 266.88,46.40 276.36,46.40 285.84,46.40 295.32,46.40 304.80,46.40 314.28,46.40 323.76,46.40" fill="none" stroke="#42a3e3" stroke-width="1.9" stroke-linejoin="round"/></svg></div><div class="card" style="left:1312.2px;top:334px"><div class="ch"><span>Conflicts Trend (per second)</span></div><svg width="349" height="191" viewBox="0 0 349 191" style="position:absolute;left:0;top:0"><line x1="34.6" y1="151.20" x2="328.5" y2="151.20" stroke="rgba(193,197,202,0.45)" stroke-width="1" stroke-dasharray="4 2"/><text x="26.6" y="155.10" text-anchor="end" font-size="11" fill="#9da5b2">0</text><line x1="34.6" y1="130.24" x2="328.5" y2="130.24" stroke="rgba(193,197,202,0.45)" stroke-width="1" stroke-dasharray="4 2"/><text x="26.6" y="134.14" text-anchor="end" font-size="11" fill="#9da5b2">0.2</text><line x1="34.6" y1="109.28" x2="328.5" y2="109.28" stroke="rgba(193,197,202,0.45)" stroke-width="1" stroke-dasharray="4 2"/><text x="26.6" y="113.18" text-anchor="end" font-size="11" fill="#9da5b2">0.4</text><line x1="34.6" y1="88.32" x2="328.5" y2="88.32" stroke="rgba(193,197,202,0.45)" stroke-width="1" stroke-dasharray="4 2"/><text x="26.6" y="92.22" text-anchor="end" font-size="11" fill="#9da5b2">0.6</text><line x1="34.6" y1="67.36" x2="328.5" y2="67.36" stroke="rgba(193,197,202,0.45)" stroke-width="1" stroke-dasharray="4 2"/><text x="26.6" y="71.26" text-anchor="end" font-size="11" fill="#9da5b2">0.8</text><line x1="34.6" y1="46.40" x2="328.5" y2="46.40" stroke="rgba(193,197,202,0.45)" stroke-width="1" stroke-dasharray="4 2"/><text x="26.6" y="50.30" text-anchor="end" font-size="11" fill="#9da5b2">1</text><line x1="39.34" y1="151.2" x2="39.34" y2="156.2" stroke="rgba(193,197,202,0.45)" stroke-width="1"/><text x="39.34" y="168.70" text-anchor="middle" font-size="11" fill="#9da5b2">10:10</text><text x="39.34" y="179.40" text-anchor="middle" font-size="11" fill="#9da5b2">01–02</text><line x1="86.74" y1="151.2" x2="86.74" y2="156.2" stroke="rgba(193,197,202,0.45)" stroke-width="1"/><text x="86.74" y="168.70" text-anchor="middle" font-size="11" fill="#9da5b2">10:15</text><text x="86.74" y="179.40" text-anchor="middle" font-size="11" fill="#9da5b2">01–02</text><line x1="134.15" y1="151.2" x2="134.15" y2="156.2" stroke="rgba(193,197,202,0.45)" stroke-width="1"/><text x="134.15" y="168.70" text-anchor="middle" font-size="11" fill="#9da5b2">10:20</text><text x="134.15" y="179.40" text-anchor="middle" font-size="11" fill="#9da5b2">01–02</text><line x1="181.55" y1="151.2" x2="181.55" y2="156.2" stroke="rgba(193,197,202,0.45)" stroke-width="1"/><text x="181.55" y="168.70" text-anchor="middle" font-size="11" fill="#9da5b2">10:25</text><text x="181.55" y="179.40" text-anchor="middle" font-size="11" fill="#9da5b2">01–02</text><line x1="228.95" y1="151.2" x2="228.95" y2="156.2" stroke="rgba(193,197,202,0.45)" stroke-width="1"/><text x="228.95" y="168.70" text-anchor="middle" font-size="11" fill="#9da5b2">10:30</text><text x="228.95" y="179.40" text-anchor="middle" font-size="11" fill="#9da5b2">01–02</text><line x1="276.36" y1="151.2" x2="276.36" y2="156.2" stroke="rgba(193,197,202,0.45)" stroke-width="1"/><text x="276.36" y="168.70" text-anchor="middle" font-size="11" fill="#9da5b2">10:35</text><text x="276.36" y="179.40" text-anchor="middle" font-size="11" fill="#9da5b2">01–02</text><line x1="323.76" y1="151.2" x2="323.76" y2="156.2" stroke="rgba(193,197,202,0.45)" stroke-width="1"/><text x="323.76" y="168.70" text-anchor="middle" font-size="11" fill="#9da5b2">10:40</text><text x="323.76" y="179.40" text-anchor="middle" font-size="11" fill="#9da5b2">01–02</text><polyline points="39.34,151.20 48.82,151.20 58.30,151.20 67.78,151.20 77.26,151.20 86.74,151.20 96.22,151.20 105.70,151.20 115.19,151.20 124.67,151.20 134.15,151.20 143.63,151.20 153.11,151.20 162.59,151.20 172.07,151.20 181.55,151.20 191.03,151.20 200.51,151.20 209.99,151.20 219.47,151.20 228.95,151.20 238.43,151.20 247.91,151.20 257.40,151.20 266.88,151.20 276.36,151.20 285.84,151.20 295.32,151.20 304.80,151.20 314.28,151.20 323.76,151.20" fill="none" stroke="#42a3e3" stroke-width="1.9" stroke-linejoin="round"/></svg></div><div class="card" style="left:239.5px;top:534px"><div class="ch"><span>Cache Hit Rate (%)</span></div><svg width="349" height="191" viewBox="0 0 349 191" style="position:absolute;left:0;top:0"><line x1="36.9" y1="151.20" x2="328.5" y2="151.20" stroke="rgba(193,197,202,0.45)" stroke-width="1" stroke-dasharray="4 2"/><text x="28.9" y="155.10" text-anchor="end" font-size="11" fill="#9da5b2">0</text><line x1="36.9" y1="125.00" x2="328.5" y2="125.00" stroke="rgba(193,197,202,0.45)" stroke-width="1" stroke-dasharray="4 2"/><text x="28.9" y="128.90" text-anchor="end" font-size="11" fill="#9da5b2">50</text><line x1="36.9" y1="98.80" x2="328.5" y2="98.80" stroke="rgba(193,197,202,0.45)" stroke-width="1" stroke-dasharray="4 2"/><text x="28.9" y="102.70" text-anchor="end" font-size="11" fill="#9da5b2">100</text><line x1="36.9" y1="72.60" x2="328.5" y2="72.60" stroke="rgba(193,197,202,0.45)" stroke-width="1" stroke-dasharray="4 2"/><text x="28.9" y="76.50" text-anchor="end" font-size="11" fill="#9da5b2">150</text><line x1="36.9" y1="46.40" x2="328.5" y2="46.40" stroke="rgba(193,197,202,0.45)" stroke-width="1" stroke-dasharray="4 2"/><text x="28.9" y="50.30" text-anchor="end" font-size="11" fill="#9da5b2">200</text><line x1="41.60" y1="151.2" x2="41.60" y2="156.2" stroke="rgba(193,197,202,0.45)" stroke-width="1"/><text x="41.60" y="168.70" text-anchor="middle" font-size="11" fill="#9da5b2">10:10</text><text x="41.60" y="179.40" text-anchor="middle" font-size="11" fill="#9da5b2">01–02</text><line x1="88.64" y1="151.2" x2="88.64" y2="156.2" stroke="rgba(193,197,202,0.45)" stroke-width="1"/><text x="88.64" y="168.70" text-anchor="middle" font-size="11" fill="#9da5b2">10:15</text><text x="88.64" y="179.40" text-anchor="middle" font-size="11" fill="#9da5b2">01–02</text><line x1="135.67" y1="151.2" x2="135.67" y2="156.2" stroke="rgba(193,197,202,0.45)" stroke-width="1"/><text x="135.67" y="168.70" text-anchor="middle" font-size="11" fill="#9da5b2">10:20</text><text x="135.67" y="179.40" text-anchor="middle" font-size="11" fill="#9da5b2">01–02</text><line x1="182.70" y1="151.2" x2="182.70" y2="156.2" stroke="rgba(193,197,202,0.45)" stroke-width="1"/><text x="182.70" y="168.70" text-anchor="middle" font-size="11" fill="#9da5b2">10:25</text><text x="182.70" y="179.40" text-anchor="middle" font-size="11" fill="#9da5b2">01–02</text><line x1="229.73" y1="151.2" x2="229.73" y2="156.2" stroke="rgba(193,197,202,0.45)" stroke-width="1"/><text x="229.73" y="168.70" text-anchor="middle" font-size="11" fill="#9da5b2">10:30</text><text x="229.73" y="179.40" text-anchor="middle" font-size="11" fill="#9da5b2">01–02</text><line x1="276.76" y1="151.2" x2="276.76" y2="156.2" stroke="rgba(193,197,202,0.45)" stroke-width="1"/><text x="276.76" y="168.70" text-anchor="middle" font-size="11" fill="#9da5b2">10:35</text><text x="276.76" y="179.40" text-anchor="middle" font-size="11" fill="#9da5b2">01–02</text><line x1="323.80" y1="151.2" x2="323.80" y2="156.2" stroke="rgba(193,197,202,0.45)" stroke-width="1"/><text x="323.80" y="168.70" text-anchor="middle" font-size="11" fill="#9da5b2">10:40</text><text x="323.80" y="179.40" text-anchor="middle" font-size="11" fill="#9da5b2">01–02</text><polyline points="41.60,46.40 51.01,46.40 60.42,46.40 69.82,46.40 79.23,46.40 88.64,46.40 98.04,46.40 107.45,46.40 116.85,46.40 126.26,46.40 135.67,46.40 145.07,46.40 154.48,46.40 163.89,46.40 173.29,46.40 182.70,46.40 192.11,46.40 201.51,46.40 210.92,46.40 220.33,46.40 229.73,46.40 239.14,46.40 248.55,46.40 257.95,46.40 267.36,46.40 276.76,46.40 286.17,46.40 295.58,46.40 304.98,46.40 314.39,46.40 323.80,46.40" fill="none" stroke="#42a3e3" stroke-width="1.9" stroke-linejoin="round"/></svg></div><div class="card" style="left:597.3px;top:534px"><div class="ch"><span>Buffers Trend (per second)</span></div><svg width="349" height="191" viewBox="0 0 349 191" style="position:absolute;left:0;top:0"><line x1="34.6" y1="151.20" x2="328.5" y2="151.20" stroke="rgba(193,197,202,0.45)" stroke-width="1" stroke-dasharray="4 2"/><text x="26.6" y="155.10" text-anchor="end" font-size="11" fill="#9da5b2">0</text><line x1="34.6" y1="135.26" x2="328.5" y2="135.26" stroke="rgba(193,197,202,0.45)" stroke-width="1" stroke-dasharray="4 2"/><text x="26.6" y="139.16" text-anchor="end" font-size="11" fill="#9da5b2">0.2</text><line x1="34.6" y1="119.32" x2="328.5" y2="119.32" stroke="rgba(193,197,202,0.45)" stroke-width="1" stroke-dasharray="4 2"/><text x="26.6" y="123.22" text-anchor="end" font-size="11" fill="#9da5b2">0.4</text><line x1="34.6" y1="103.38" x2="328.5" y2="103.38" stroke="rgba(193,197,202,0.45)" stroke-width="1" stroke-dasharray="4 2"/><text x="26.6" y="107.28" text-anchor="end" font-size="11" fill="#9da5b2">0.6</text><line x1="34.6" y1="87.44" x2="328.5" y2="87.44" stroke="rgba(193,197,202,0.45)" stroke-width="1" stroke-dasharray="4 2"/><text x="26.6" y="91.34" text-anchor="end" font-size="11" fill="#9da5b2">0.8</text><line x1="34.6" y1="71.50" x2="328.5" y2="71.50" stroke="rgba(193,197,202,0.45)" stroke-width="1" stroke-dasharray="4 2"/><text x="26.6" y="75.40" text-anchor="end" font-size="11" fill="#9da5b2">1</text><line x1="39.34" y1="151.2" x2="39.34" y2="156.2" stroke="rgba(193,197,202,0.45)" stroke-width="1"/><text x="39.34" y="168.70" text-anchor="middle" font-size="11" fill="#9da5b2">10:10</text><text x="39.34" y="179.40" text-anchor="middle" font-size="11" fill="#9da5b2">01–02</text><line x1="86.74" y1="151.2" x2="86.74" y2="156.2" stroke="rgba(193,197,202,0.45)" stroke-width="1"/><text x="86.74" y="168.70" text-anchor="middle" font-size="11" fill="#9da5b2">10:15</text><text x="86.74" y="179.40" text-anchor="middle" font-size="11" fill="#9da5b2">01–02</text><line x1="134.15" y1="151.2" x2="134.15" y2="156.2" stroke="rgba(193,197,202,0.45)" stroke-width="1"/><text x="134.15" y="168.70" text-anchor="middle" font-size="11" fill="#9da5b2">10:20</text><text x="134.15" y="179.40" text-anchor="middle" font-size="11" fill="#9da5b2">01–02</text><line x1="181.55" y1="151.2" x2="181.55" y2="156.2" stroke="rgba(193,197,202,0.45)" stroke-width="1"/><text x="181.55" y="168.70" text-anchor="middle" font-size="11" fill="#9da5b2">10:25</text><text x="181.55" y="179.40" text-anchor="middle" font-size="11" fill="#9da5b2">01–02</text><line x1="228.95" y1="151.2" x2="228.95" y2="156.2" stroke="rgba(193,197,202,0.45)" stroke-width="1"/><text x="228.95" y="168.70" text-anchor="middle" font-size="11" fill="#9da5b2">10:30</text><text x="228.95" y="179.40" text-anchor="middle" font-size="11" fill="#9da5b2">01–02</text><line x1="276.36" y1="151.2" x2="276.36" y2="156.2" stroke="rgba(193,197,202,0.45)" stroke-width="1"/><text x="276.36" y="168.70" text-anchor="middle" font-size="11" fill="#9da5b2">10:35</text><text x="276.36" y="179.40" text-anchor="middle" font-size="11" fill="#9da5b2">01–02</text><line x1="323.76" y1="151.2" x2="323.76" y2="156.2" stroke="rgba(193,197,202,0.45)" stroke-width="1"/><text x="323.76" y="168.70" text-anchor="middle" font-size="11" fill="#9da5b2">10:40</text><text x="323.76" y="179.40" text-anchor="middle" font-size="11" fill="#9da5b2">01–02</text><polyline points="39.34,151.20 48.82,151.20 58.30,151.20 67.78,151.20 77.26,151.20 86.74,151.20 96.22,151.20 105.70,151.20 115.19,151.20 124.67,151.20 134.15,151.20 143.63,151.20 153.11,151.20 162.59,151.20 172.07,151.20 181.55,151.20 191.03,151.20 200.51,151.20 209.99,151.20 219.47,151.20 228.95,151.20 238.43,151.20 247.91,151.20 257.40,151.20 266.88,151.20 276.36,151.20 285.84,151.20 295.32,151.20 304.80,151.20 314.28,151.20 323.76,151.20" fill="none" stroke="#e4659b" stroke-width="1.9" stroke-linejoin="round"/></svg><div class="lg" style="top:48.7px"><i style="left:16px;background:#3a9de0"></i><b style="left:33px">meter_pg_buffers_clean</b><i style="left:175px;background:#6fbde9"></i><b style="left:193px;width:72px;overflow:hidden">meter_pg_bu</b><s class="al" style="left:276px"></s><b style="left:296px">1/5</b><s class="ar" style="left:325px"></s></div></div><div class="card" style="left:954.7px;top:534px"><div class="ch"><span>Active Sessions</span></div><svg width="349" height="191" viewBox="0 0 349 191" style="position:absolute;left:0;top:0"><line x1="34.6" y1="151.20" x2="328.5" y2="151.20" stroke="rgba(193,197,202,0.45)" stroke-width="1" stroke-dasharray="4 2"/><text x="26.6" y="155.10" text-anchor="end" font-size="11" fill="#9da5b2">0</text><line x1="34.6" y1="125.00" x2="328.5" y2="125.00" stroke="rgba(193,197,202,0.45)" stroke-width="1" stroke-dasharray="4 2"/><text x="26.6" y="128.90" text-anchor="end" font-size="11" fill="#9da5b2">0.5</text><line x1="34.6" y1="98.80" x2="328.5" y2="98.80" stroke="rgba(193,197,202,0.45)" stroke-width="1" stroke-dasharray="4 2"/><text x="26.6" y="102.70" text-anchor="end" font-size="11" fill="#9da5b2">1</text><line x1="34.6" y1="72.60" x2="328.5" y2="72.60" stroke="rgba(193,197,202,0.45)" stroke-width="1" stroke-dasharray="4 2"/><text x="26.6" y="76.50" text-anchor="end" font-size="11" fill="#9da5b2">1.5</text><line x1="34.6" y1="46.40" x2="328.5" y2="46.40" stroke="rgba(193,197,202,0.45)" stroke-width="1" stroke-dasharray="4 2"/><text x="26.6" y="50.30" text-anchor="end" font-size="11" fill="#9da5b2">2</text><line x1="39.34" y1="151.2" x2="39.34" y2="156.2" stroke="rgba(193,197,202,0.45)" stroke-width="1"/><text x="39.34" y="168.70" text-anchor="middle" font-size="11" fill="#9da5b2">10:10</text><text x="39.34" y="179.40" text-anchor="middle" font-size="11" fill="#9da5b2">01–02</text><line x1="86.74" y1="151.2" x2="86.74" y2="156.2" stroke="rgba(193,197,202,0.45)" stroke-width="1"/><text x="86.74" y="168.70" text-anchor="middle" font-size="11" fill="#9da5b2">10:15</text><text x="86.74" y="179.40" text-anchor="middle" font-size="11" fill="#9da5b2">01–02</text><line x1="134.15" y1="151.2" x2="134.15" y2="156.2" stroke="rgba(193,197,202,0.45)" stroke-width="1"/><text x="134.15" y="168.70" text-anchor="middle" font-size="11" fill="#9da5b2">10:20</text><text x="134.15" y="179.40" text-anchor="middle" font-size="11" fill="#9da5b2">01–02</text><line x1="181.55" y1="151.2" x2="181.55" y2="156.2" stroke="rgba(193,197,202,0.45)" stroke-width="1"/><text x="181.55" y="168.70" text-anchor="middle" font-size="11" fill="#9da5b2">10:25</text><text x="181.55" y="179.40" text-anchor="middle" font-size="11" fill="#9da5b2">01–02</text><line x1="228.95" y1="151.2" x2="228.95" y2="156.2" stroke="rgba(193,197,202,0.45)" stroke-width="1"/><text x="228.95" y="168.70" text-anchor="middle" font-size="11" fill="#9da5b2">10:30</text><text x="228.95" y="179.40" text-anchor="middle" font-size="11" fill="#9da5b2">01–02</text><line x1="276.36" y1="151.2" x2="276.36" y2="156.2" stroke="rgba(193,197,202,0.45)" stroke-width="1"/><text x="276.36" y="168.70" text-anchor="middle" font-size="11" fill="#9da5b2">10:35</text><text x="276.36" y="179.40" text-anchor="middle" font-size="11" fill="#9da5b2">01–02</text><line x1="323.76" y1="151.2" x2="323.76" y2="156.2" stroke="rgba(193,197,202,0.45)" stroke-width="1"/><text x="323.76" y="168.70" text-anchor="middle" font-size="11" fill="#9da5b2">10:40</text><text x="323.76" y="179.40" text-anchor="middle" font-size="11" fill="#9da5b2">01–02</text><polyline points="39.34,46.40 48.82,46.40 58.30,46.40 67.78,46.40 77.26,46.40 86.74,46.40 96.22,46.40 105.70,46.40 115.19,98.80 124.67,46.40 134.15,46.40 143.63,46.40 153.11,46.40 162.59,46.40 172.07,46.40 181.55,46.40 191.03,98.80 200.51,46.40 209.99,98.80 219.47,46.40 228.95,46.40 238.43,98.80 247.91,98.80 257.40,46.40 266.88,46.40 276.36,46.40 285.84,46.40 295.32,46.40 304.80,98.80 314.28,46.40 323.76,98.80" fill="none" stroke="#42a3e3" stroke-width="1.9" stroke-linejoin="round"/></svg></div><div class="card" style="left:1312.2px;top:534px"><div class="ch"><span>Idle Sessions</span></div><svg width="349" height="191" viewBox="0 0 349 191" style="position:absolute;left:0;top:0"><line x1="34.6" y1="151.20" x2="328.5" y2="151.20" stroke="rgba(193,197,202,0.45)" stroke-width="1" stroke-dasharray="4 2"/><text x="26.6" y="155.10" text-anchor="end" font-size="11" fill="#9da5b2">0</text><line x1="34.6" y1="130.24" x2="328.5" y2="130.24" stroke="rgba(193,197,202,0.45)" stroke-width="1" stroke-dasharray="4 2"/><text x="26.6" y="134.14" text-anchor="end" font-size="11" fill="#9da5b2">0.2</text><line x1="34.6" y1="109.28" x2="328.5" y2="109.28" stroke="rgba(193,197,202,0.45)" stroke-width="1" stroke-dasharray="4 2"/><text x="26.6" y="113.18" text-anchor="end" font-size="11" fill="#9da5b2">0.4</text><line x1="34.6" y1="88.32" x2="328.5" y2="88.32" stroke="rgba(193,197,202,0.45)" stroke-width="1" stroke-dasharray="4 2"/><text x="26.6" y="92.22" text-anchor="end" font-size="11" fill="#9da5b2">0.6</text><line x1="34.6" y1="67.36" x2="328.5" y2="67.36" stroke="rgba(193,197,202,0.45)" stroke-width="1" stroke-dasharray="4 2"/><text x="26.6" y="71.26" text-anchor="end" font-size="11" fill="#9da5b2">0.8</text><line x1="34.6" y1="46.40" x2="328.5" y2="46.40" stroke="rgba(193,197,202,0.45)" stroke-width="1" stroke-dasharray="4 2"/><text x="26.6" y="50.30" text-anchor="end" font-size="11" fill="#9da5b2">1</text><line x1="39.34" y1="151.2" x2="39.34" y2="156.2" stroke="rgba(193,197,202,0.45)" stroke-width="1"/><text x="39.34" y="168.70" text-anchor="middle" font-size="11" fill="#9da5b2">10:10</text><text x="39.34" y="179.40" text-anchor="middle" font-size="11" fill="#9da5b2">01–02</text><line x1="86.74" y1="151.2" x2="86.74" y2="156.2" stroke="rgba(193,197,202,0.45)" stroke-width="1"/><text x="86.74" y="168.70" text-anchor="middle" font-size="11" fill="#9da5b2">10:15</text><text x="86.74" y="179.40" text-anchor="middle" font-size="11" fill="#9da5b2">01–02</text><line x1="134.15" y1="151.2" x2="134.15" y2="156.2" stroke="rgba(193,197,202,0.45)" stroke-width="1"/><text x="134.15" y="168.70" text-anchor="middle" font-size="11" fill="#9da5b2">10:20</text><text x="134.15" y="179.40" text-anchor="middle" font-size="11" fill="#9da5b2">01–02</text><line x1="181.55" y1="151.2" x2="181.55" y2="156.2" stroke="rgba(193,197,202,0.45)" stroke-width="1"/><text x="181.55" y="168.70" text-anchor="middle" font-size="11" fill="#9da5b2">10:25</text><text x="181.55" y="179.40" text-anchor="middle" font-size="11" fill="#9da5b2">01–02</text><line x1="228.95" y1="151.2" x2="228.95" y2="156.2" stroke="rgba(193,197,202,0.45)" stroke-width="1"/><text x="228.95" y="168.70" text-anchor="middle" font-size="11" fill="#9da5b2">10:30</text><text x="228.95" y="179.40" text-anchor="middle" font-size="11" fill="#9da5b2">01–02</text><line x1="276.36" y1="151.2" x2="276.36" y2="156.2" stroke="rgba(193,197,202,0.45)" stroke-width="1"/><text x="276.36" y="168.70" text-anchor="middle" font-size="11" fill="#9da5b2">10:35</text><text x="276.36" y="179.40" text-anchor="middle" font-size="11" fill="#9da5b2">01–02</text><line x1="323.76" y1="151.2" x2="323.76" y2="156.2" stroke="rgba(193,197,202,0.45)" stroke-width="1"/><text x="323.76" y="168.70" text-anchor="middle" font-size="11" fill="#9da5b2">10:40</text><text x="323.76" y="179.40" text-anchor="middle" font-size="11" fill="#9da5b2">01–02</text><polyline points="39.34,151.20 48.82,151.20 58.30,151.20 67.78,151.20 77.26,151.20 86.74,151.20 96.22,151.20 105.70,151.20 115.19,46.40 124.67,151.20 134.15,151.20 143.63,151.20 153.11,151.20 162.59,151.20 172.07,151.20 181.55,151.20 191.03,46.40 200.51,151.20 209.99,46.40 219.47,151.20 228.95,151.20 238.43,46.40 247.91,46.40 257.40,151.20 266.88,151.20 276.36,151.20 285.84,151.20 295.32,151.20 304.80,46.40 314.28,151.20 323.76,46.40" fill="none" stroke="#42a3e3" stroke-width="1.9" stroke-linejoin="round"/></svg></div><div class="card" style="left:239.5px;top:734px"><div class="ch"><span>Deadlocks Trend (per second)</span></div><svg width="349" height="191" viewBox="0 0 349 191" style="position:absolute;left:0;top:0"><line x1="34.6" y1="151.20" x2="328.5" y2="151.20" stroke="rgba(193,197,202,0.45)" stroke-width="1" stroke-dasharray="4 2"/><text x="26.6" y="155.10" text-anchor="end" font-size="11" fill="#9da5b2">0</text><line x1="34.6" y1="130.24" x2="328.5" y2="130.24" stroke="rgba(193,197,202,0.45)" stroke-width="1" stroke-dasharray="4 2"/><text x="26.6" y="134.14" text-anchor="end" font-size="11" fill="#9da5b2">0.2</text><line x1="34.6" y1="109.28" x2="328.5" y2="109.28" stroke="rgba(193,197,202,0.45)" stroke-width="1" stroke-dasharray="4 2"/><text x="26.6" y="113.18" text-anchor="end" font-size="11" fill="#9da5b2">0.4</text><line x1="34.6" y1="88.32" x2="328.5" y2="88.32" stroke="rgba(193,197,202,0.45)" stroke-width="1" stroke-dasharray="4 2"/><text x="26.6" y="92.22" text-anchor="end" font-size="11" fill="#9da5b2">0.6</text><line x1="34.6" y1="67.36" x2="328.5" y2="67.36" stroke="rgba(193,197,202,0.45)" stroke-width="1" stroke-dasharray="4 2"/><text x="26.6" y="71.26" text-anchor="end" font-size="11" fill="#9da5b2">0.8</text><line x1="34.6" y1="46.40" x2="328.5" y2="46.40" stroke="rgba(193,197,202,0.45)" stroke-width="1" stroke-dasharray="4 2"/><text x="26.6" y="50.30" text-anchor="end" font-size="11" fill="#9da5b2">1</text><line x1="39.34" y1="151.2" x2="39.34" y2="156.2" stroke="rgba(193,197,202,0.45)" stroke-width="1"/><text x="39.34" y="168.70" text-anchor="middle" font-size="11" fill="#9da5b2">10:10</text><text x="39.34" y="179.40" text-anchor="middle" font-size="11" fill="#9da5b2">01–02</text><line x1="86.74" y1="151.2" x2="86.74" y2="156.2" stroke="rgba(193,197,202,0.45)" stroke-width="1"/><text x="86.74" y="168.70" text-anchor="middle" font-size="11" fill="#9da5b2">10:15</text><text x="86.74" y="179.40" text-anchor="middle" font-size="11" fill="#9da5b2">01–02</text><line x1="134.15" y1="151.2" x2="134.15" y2="156.2" stroke="rgba(193,197,202,0.45)" stroke-width="1"/><text x="134.15" y="168.70" text-anchor="middle" font-size="11" fill="#9da5b2">10:20</text><text x="134.15" y="179.40" text-anchor="middle" font-size="11" fill="#9da5b2">01–02</text><line x1="181.55" y1="151.2" x2="181.55" y2="156.2" stroke="rgba(193,197,202,0.45)" stroke-width="1"/><text x="181.55" y="168.70" text-anchor="middle" font-size="11" fill="#9da5b2">10:25</text><text x="181.55" y="179.40" text-anchor="middle" font-size="11" fill="#9da5b2">01–02</text><line x1="228.95" y1="151.2" x2="228.95" y2="156.2" stroke="rgba(193,197,202,0.45)" stroke-width="1"/><text x="228.95" y="168.70" text-anchor="middle" font-size="11" fill="#9da5b2">10:30</text><text x="228.95" y="179.40" text-anchor="middle" font-size="11" fill="#9da5b2">01–02</text><line x1="276.36" y1="151.2" x2="276.36" y2="156.2" stroke="rgba(193,197,202,0.45)" stroke-width="1"/><text x="276.36" y="168.70" text-anchor="middle" font-size="11" fill="#9da5b2">10:35</text><text x="276.36" y="179.40" text-anchor="middle" font-size="11" fill="#9da5b2">01–02</text><line x1="323.76" y1="151.2" x2="323.76" y2="156.2" stroke="rgba(193,197,202,0.45)" stroke-width="1"/><text x="323.76" y="168.70" text-anchor="middle" font-size="11" fill="#9da5b2">10:40</text><text x="323.76" y="179.40" text-anchor="middle" font-size="11" fill="#9da5b2">01–02</text></svg></div><div class="card" style="left:597.3px;top:734px"><div class="ch"><span>Temporary Files Trend (per second)</span></div><svg width="349" height="191" viewBox="0 0 349 191" style="position:absolute;left:0;top:0"><line x1="34.6" y1="151.20" x2="328.5" y2="151.20" stroke="rgba(193,197,202,0.45)" stroke-width="1" stroke-dasharray="4 2"/><text x="26.6" y="155.10" text-anchor="end" font-size="11" fill="#9da5b2">0</text><line x1="34.6" y1="130.24" x2="328.5" y2="130.24" stroke="rgba(193,197,202,0.45)" stroke-width="1" stroke-dasharray="4 2"/><text x="26.6" y="134.14" text-anchor="end" font-size="11" fill="#9da5b2">0.2</text><line x1="34.6" y1="109.28" x2="328.5" y2="109.28" stroke="rgba(193,197,202,0.45)" stroke-width="1" stroke-dasharray="4 2"/><text x="26.6" y="113.18" text-anchor="end" font-size="11" fill="#9da5b2">0.4</text><line x1="34.6" y1="88.32" x2="328.5" y2="88.32" stroke="rgba(193,197,202,0.45)" stroke-width="1" stroke-dasharray="4 2"/><text x="26.6" y="92.22" text-anchor="end" font-size="11" fill="#9da5b2">0.6</text><line x1="34.6" y1="67.36" x2="328.5" y2="67.36" stroke="rgba(193,197,202,0.45)" stroke-width="1" stroke-dasharray="4 2"/><text x="26.6" y="71.26" text-anchor="end" font-size="11" fill="#9da5b2">0.8</text><line x1="34.6" y1="46.40" x2="328.5" y2="46.40" stroke="rgba(193,197,202,0.45)" stroke-width="1" stroke-dasharray="4 2"/><text x="26.6" y="50.30" text-anchor="end" font-size="11" fill="#9da5b2">1</text><line x1="39.34" y1="151.2" x2="39.34" y2="156.2" stroke="rgba(193,197,202,0.45)" stroke-width="1"/><text x="39.34" y="168.70" text-anchor="middle" font-size="11" fill="#9da5b2">10:10</text><text x="39.34" y="179.40" text-anchor="middle" font-size="11" fill="#9da5b2">01–02</text><line x1="86.74" y1="151.2" x2="86.74" y2="156.2" stroke="rgba(193,197,202,0.45)" stroke-width="1"/><text x="86.74" y="168.70" text-anchor="middle" font-size="11" fill="#9da5b2">10:15</text><text x="86.74" y="179.40" text-anchor="middle" font-size="11" fill="#9da5b2">01–02</text><line x1="134.15" y1="151.2" x2="134.15" y2="156.2" stroke="rgba(193,197,202,0.45)" stroke-width="1"/><text x="134.15" y="168.70" text-anchor="middle" font-size="11" fill="#9da5b2">10:20</text><text x="134.15" y="179.40" text-anchor="middle" font-size="11" fill="#9da5b2">01–02</text><line x1="181.55" y1="151.2" x2="181.55" y2="156.2" stroke="rgba(193,197,202,0.45)" stroke-width="1"/><text x="181.55" y="168.70" text-anchor="middle" font-size="11" fill="#9da5b2">10:25</text><text x="181.55" y="179.40" text-anchor="middle" font-size="11" fill="#9da5b2">01–02</text><line x1="228.95" y1="151.2" x2="228.95" y2="156.2" stroke="rgba(193,197,202,0.45)" stroke-width="1"/><text x="228.95" y="168.70" text-anchor="middle" font-size="11" fill="#9da5b2">10:30</text><text x="228.95" y="179.40" text-anchor="middle" font-size="11" fill="#9da5b2">01–02</text><line x1="276.36" y1="151.2" x2="276.36" y2="156.2" stroke="rgba(193,197,202,0.45)" stroke-width="1"/><text x="276.36" y="168.70" text-anchor="middle" font-size="11" fill="#9da5b2">10:35</text><text x="276.36" y="179.40" text-anchor="middle" font-size="11" fill="#9da5b2">01–02</text><line x1="323.76" y1="151.2" x2="323.76" y2="156.2" stroke="rgba(193,197,202,0.45)" stroke-width="1"/><text x="323.76" y="168.70" text-anchor="middle" font-size="11" fill="#9da5b2">10:40</text><text x="323.76" y="179.40" text-anchor="middle" font-size="11" fill="#9da5b2">01–02</text></svg></div><div class="card" style="left:954.7px;top:734px"><div class="ch"><span>Checkpoint Stat Trend (per second)</span></div><svg width="349" height="191" viewBox="0 0 349 191" style="position:absolute;left:0;top:0"><line x1="34.6" y1="151.20" x2="328.5" y2="151.20" stroke="rgba(193,197,202,0.45)" stroke-width="1" stroke-dasharray="4 2"/><text x="26.6" y="155.10" text-anchor="end" font-size="11" fill="#9da5b2">0</text><line x1="34.6" y1="135.26" x2="328.5" y2="135.26" stroke="rgba(193,197,202,0.45)" stroke-width="1" stroke-dasharray="4 2"/><text x="26.6" y="139.16" text-anchor="end" font-size="11" fill="#9da5b2">0.2</text><line x1="34.6" y1="119.32" x2="328.5" y2="119.32" stroke="rgba(193,197,202,0.45)" stroke-width="1" stroke-dasharray="4 2"/><text x="26.6" y="123.22" text-anchor="end" font-size="11" fill="#9da5b2">0.4</text><line x1="34.6" y1="103.38" x2="328.5" y2="103.38" stroke="rgba(193,197,202,0.45)" stroke-width="1" stroke-dasharray="4 2"/><text x="26.6" y="107.28" text-anchor="end" font-size="11" fill="#9da5b2">0.6</text><line x1="34.6" y1="87.44" x2="328.5" y2="87.44" stroke="rgba(193,197,202,0.45)" stroke-width="1" stroke-dasharray="4 2"/><text x="26.6" y="91.34" text-anchor="end" font-size="11" fill="#9da5b2">0.8</text><line x1="34.6" y1="71.50" x2="328.5" y2="71.50" stroke="rgba(193,197,202,0.45)" stroke-width="1" stroke-dasharray="4 2"/><text x="26.6" y="75.40" text-anchor="end" font-size="11" fill="#9da5b2">1</text><line x1="39.34" y1="151.2" x2="39.34" y2="156.2" stroke="rgba(193,197,202,0.45)" stroke-width="1"/><text x="39.34" y="168.70" text-anchor="middle" font-size="11" fill="#9da5b2">10:10</text><text x="39.34" y="179.40" text-anchor="middle" font-size="11" fill="#9da5b2">01–02</text><line x1="86.74" y1="151.2" x2="86.74" y2="156.2" stroke="rgba(193,197,202,0.45)" stroke-width="1"/><text x="86.74" y="168.70" text-anchor="middle" font-size="11" fill="#9da5b2">10:15</text><text x="86.74" y="179.40" text-anchor="middle" font-size="11" fill="#9da5b2">01–02</text><line x1="134.15" y1="151.2" x2="134.15" y2="156.2" stroke="rgba(193,197,202,0.45)" stroke-width="1"/><text x="134.15" y="168.70" text-anchor="middle" font-size="11" fill="#9da5b2">10:20</text><text x="134.15" y="179.40" text-anchor="middle" font-size="11" fill="#9da5b2">01–02</text><line x1="181.55" y1="151.2" x2="181.55" y2="156.2" stroke="rgba(193,197,202,0.45)" stroke-width="1"/><text x="181.55" y="168.70" text-anchor="middle" font-size="11" fill="#9da5b2">10:25</text><text x="181.55" y="179.40" text-anchor="middle" font-size="11" fill="#9da5b2">01–02</text><line x1="228.95" y1="151.2" x2="228.95" y2="156.2" stroke="rgba(193,197,202,0.45)" stroke-width="1"/><text x="228.95" y="168.70" text-anchor="middle" font-size="11" fill="#9da5b2">10:30</text><text x="228.95" y="179.40" text-anchor="middle" font-size="11" fill="#9da5b2">01–02</text><line x1="276.36" y1="151.2" x2="276.36" y2="156.2" stroke="rgba(193,197,202,0.45)" stroke-width="1"/><text x="276.36" y="168.70" text-anchor="middle" font-size="11" fill="#9da5b2">10:35</text><text x="276.36" y="179.40" text-anchor="middle" font-size="11" fill="#9da5b2">01–02</text><line x1="323.76" y1="151.2" x2="323.76" y2="156.2" stroke="rgba(193,197,202,0.45)" stroke-width="1"/><text x="323.76" y="168.70" text-anchor="middle" font-size="11" fill="#9da5b2">10:40</text><text x="323.76" y="179.40" text-anchor="middle" font-size="11" fill="#9da5b2">01–02</text></svg><div class="lg" style="top:48.5px"><i style="left:15px;background:#3a9de0"></i><b style="left:32px">meter_pg_checkpoint_sync_time_rate</b><i style="left:251px;background:#6fbde9"></i><s class="al" style="left:275px"></s><b style="left:295px">1/4</b><s class="ar" style="left:325px"></s></div></div><div class="card" style="left:1312.2px;top:734px"><div class="ch"><span>Locks</span></div><svg width="349" height="191" viewBox="0 0 349 191" style="position:absolute;left:0;top:0"><line x1="34.6" y1="151.20" x2="328.5" y2="151.20" stroke="rgba(193,197,202,0.45)" stroke-width="1" stroke-dasharray="4 2"/><text x="26.6" y="155.10" text-anchor="end" font-size="11" fill="#9da5b2">0</text><line x1="34.6" y1="125.00" x2="328.5" y2="125.00" stroke="rgba(193,197,202,0.45)" stroke-width="1" stroke-dasharray="4 2"/><text x="26.6" y="128.90" text-anchor="end" font-size="11" fill="#9da5b2">0.5</text><line x1="34.6" y1="98.80" x2="328.5" y2="98.80" stroke="rgba(193,197,202,0.45)" stroke-width="1" stroke-dasharray="4 2"/><text x="26.6" y="102.70" text-anchor="end" font-size="11" fill="#9da5b2">1</text><line x1="34.6" y1="72.60" x2="328.5" y2="72.60" stroke="rgba(193,197,202,0.45)" stroke-width="1" stroke-dasharray="4 2"/><text x="26.6" y="76.50" text-anchor="end" font-size="11" fill="#9da5b2">1.5</text><line x1="34.6" y1="46.40" x2="328.5" y2="46.40" stroke="rgba(193,197,202,0.45)" stroke-width="1" stroke-dasharray="4 2"/><text x="26.6" y="50.30" text-anchor="end" font-size="11" fill="#9da5b2">2</text><line x1="39.34" y1="151.2" x2="39.34" y2="156.2" stroke="rgba(193,197,202,0.45)" stroke-width="1"/><text x="39.34" y="168.70" text-anchor="middle" font-size="11" fill="#9da5b2">10:10</text><text x="39.34" y="179.40" text-anchor="middle" font-size="11" fill="#9da5b2">01–02</text><line x1="86.74" y1="151.2" x2="86.74" y2="156.2" stroke="rgba(193,197,202,0.45)" stroke-width="1"/><text x="86.74" y="168.70" text-anchor="middle" font-size="11" fill="#9da5b2">10:15</text><text x="86.74" y="179.40" text-anchor="middle" font-size="11" fill="#9da5b2">01–02</text><line x1="134.15" y1="151.2" x2="134.15" y2="156.2" stroke="rgba(193,197,202,0.45)" stroke-width="1"/><text x="134.15" y="168.70" text-anchor="middle" font-size="11" fill="#9da5b2">10:20</text><text x="134.15" y="179.40" text-anchor="middle" font-size="11" fill="#9da5b2">01–02</text><line x1="181.55" y1="151.2" x2="181.55" y2="156.2" stroke="rgba(193,197,202,0.45)" stroke-width="1"/><text x="181.55" y="168.70" text-anchor="middle" font-size="11" fill="#9da5b2">10:25</text><text x="181.55" y="179.40" text-anchor="middle" font-size="11" fill="#9da5b2">01–02</text><line x1="228.95" y1="151.2" x2="228.95" y2="156.2" stroke="rgba(193,197,202,0.45)" stroke-width="1"/><text x="228.95" y="168.70" text-anchor="middle" font-size="11" fill="#9da5b2">10:30</text><text x="228.95" y="179.40" text-anchor="middle" font-size="11" fill="#9da5b2">01–02</text><line x1="276.36" y1="151.2" x2="276.36" y2="156.2" stroke="rgba(193,197,202,0.45)" stroke-width="1"/><text x="276.36" y="168.70" text-anchor="middle" font-size="11" fill="#9da5b2">10:35</text><text x="276.36" y="179.40" text-anchor="middle" font-size="11" fill="#9da5b2">01–02</text><line x1="323.76" y1="151.2" x2="323.76" y2="156.2" stroke="rgba(193,197,202,0.45)" stroke-width="1"/><text x="323.76" y="168.70" text-anchor="middle" font-size="11" fill="#9da5b2">10:40</text><text x="323.76" y="179.40" text-anchor="middle" font-size="11" fill="#9da5b2">01–02</text><polyline points="39.34,46.40 48.82,98.80 58.30,46.40 67.78,46.40 77.26,46.40 86.74,46.40 96.22,98.80 105.70,46.40 115.19,98.80 124.67,46.40 134.15,46.40 143.63,46.40 153.11,98.80 162.59,46.40 172.07,46.40 181.55,46.40 191.03,98.80 200.51,46.40 209.99,98.80 219.47,46.40 228.95,46.40 238.43,98.80 247.91,98.80 257.40,46.40 266.88,46.40 276.36,46.40 285.84,46.40 295.32,46.40 304.80,98.80 314.28,46.40 323.76,46.40" fill="none" stroke="#42a3e3" stroke-width="1.9" stroke-linejoin="round"/></svg></div>
</div>
</body></html>
